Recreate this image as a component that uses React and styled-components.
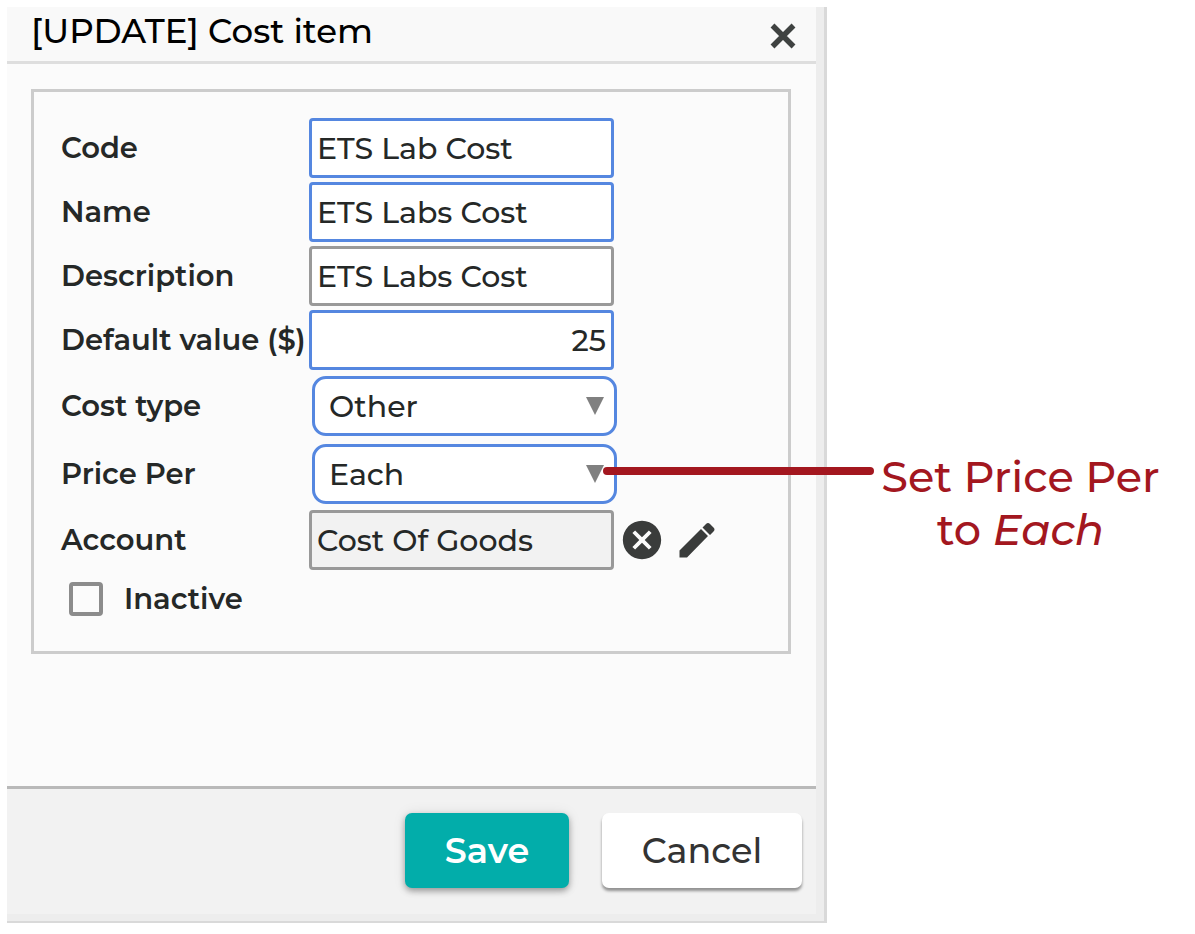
import React from "react";
import styled, { createGlobalStyle } from "styled-components";
import { MdCancel, MdEdit } from "react-icons/md";

const GlobalStyle = createGlobalStyle`
  *, *::before, *::after { box-sizing: border-box; }
  body {
    margin: 0;
    background: #fff;
    color: #252827;
    font-family: Montserrat, Inter, "Liberation Sans", sans-serif;
    font-weight: 500;
  }
  button, input, select { font: inherit; color: inherit; }
`;

const Page = styled.div`
  display: grid;
  grid-template-columns: minmax(0, 820px) minmax(320px, 1fr);
  align-items: start;
  padding: 7px 0 11px 7px;
`;

const Dialog = styled.section`
  border: solid #d9d9d9;
  border-width: 0 3px 2px 0;
`;

const Frame = styled.div`
  border: solid #ededed;
  border-width: 0 8px 7px 0;
  background: #fbfbfb;
`;

const Header = styled.header`
  display: flex;
  align-items: flex-start;
  justify-content: space-between;
  padding: 0 16px 6px 24px;
  border-bottom: 3px solid #dedede;
  background: #f9f9f9;
`;

const Title = styled.h1`
  margin: 0;
  color: #000;
  font-size: 34px;
  line-height: 48px;
  font-weight: 500;
`;

const IconButton = styled.button`
  display: flex;
  padding: 0;
  border: 0;
  background: none;
  color: #3a3c3b;
  cursor: pointer;
`;

const CloseButton = styled(IconButton)`
  padding-top: 12px;
`;

const Content = styled.div`
  padding: 25px 25px 132px 24px;
`;

const Group = styled.fieldset`
  display: flex;
  flex-direction: column;
  gap: 4px;
  min-width: 0;
  margin: 0;
  padding: 26px 27px 27px;
  border: 3px solid #ccc;
`;

const Row = styled.div`
  display: grid;
  grid-template-columns: 248px minmax(0, 305px) auto;
  align-items: center;
  justify-content: start;
  font-size: 30px;
`;

const Label = styled.label`
  font-size: 29px;
  line-height: 36px;
  font-weight: 600;
  white-space: nowrap;
`;

const TextInput = styled.input`
  width: 100%;
  height: 60px;
  padding: 0 5px;
  border: 3px solid ${(p) => (p.$required ? "#5587e0" : "#999")};
  border-radius: 4px;
  background: ${(p) => (p.readOnly ? "#f2f2f2" : "#fff")};
  text-align: ${(p) => (p.$numeric ? "right" : "left")};
  outline: none;
`;

const SelectBox = styled.div`
  position: relative;
  width: 100%;
  margin: 2px 0 2px 3px;
`;

const Select = styled.select`
  display: block;
  width: 100%;
  height: 60px;
  padding: 0 40px 0 14px;
  border: 3px solid #5587e0;
  border-radius: 14px;
  background: #fff;
  appearance: none;
  outline: none;
`;

const Arrow = styled.svg`
  position: absolute;
  top: 21px;
  right: 13px;
  pointer-events: none;
`;

const Actions = styled.div`
  display: flex;
  gap: 9px;
  padding-left: 5px;
`;

const CheckRow = styled.div`
  display: flex;
  align-items: center;
  gap: 21px;
  height: 50px;
  padding-left: 8px;
`;

const Checkbox = styled.input`
  width: 34px;
  height: 34px;
  margin: 0;
  border: 4px solid #8c8c8c;
  border-radius: 4px;
  background: #fbfbfb;
  appearance: none;

  &:checked { background: #8c8c8c; }
`;

const Footer = styled.footer`
  display: flex;
  justify-content: flex-end;
  gap: 33px;
  padding: 24px 14px 26px;
  border-top: 3px solid #b9b9b9;
  background: #f2f2f2;
`;

const Button = styled.button`
  min-width: ${(p) => (p.$primary ? "164px" : "200px")};
  height: 75px;
  padding: 0 24px;
  border: 0;
  border-radius: 7px;
  background: ${(p) => (p.$primary ? "#02adaa" : "#fff")};
  color: ${(p) => (p.$primary ? "#fff" : "#333")};
  box-shadow: ${(p) =>
    p.$primary
      ? "0 3px 6px rgba(0, 0, 0, 0.35), 0 0 14px rgba(0, 0, 0, 0.08)"
      : "0 3px 3px rgba(0, 0, 0, 0.4)"};
  font-size: 35px;
  font-weight: ${(p) => (p.$primary ? 600 : 500)};
  cursor: pointer;
`;

const Note = styled.aside`
  position: relative;
  margin-top: 443px;
  padding: 0 28px 0 47px;
  color: #a3171f;
  font-size: 43px;
  line-height: 53px;
  text-align: center;
`;

const Pointer = styled.span`
  position: absolute;
  top: 17px;
  right: calc(100% - 47px);
  width: 271px;
  height: 8px;
  border-radius: 4px;
  background: #a3171f;
`;

const NoteText = styled.p`
  margin: 0;
`;

function TextField({ id, label, required, numeric, readOnly, value, children }) {
  return (
    <Row>
      <Label htmlFor={id}>{label}</Label>
      <TextInput
        id={id}
        type="text"
        defaultValue={value}
        readOnly={readOnly}
        $required={required}
        $numeric={numeric}
      />
      {children}
    </Row>
  );
}

function SelectField({ id, label, options }) {
  return (
    <Row>
      <Label htmlFor={id}>{label}</Label>
      <SelectBox>
        <Select id={id} defaultValue={options[0]}>
          {options.map((o) => (
            <option key={o}>{o}</option>
          ))}
        </Select>
        <Arrow width="18" height="18" viewBox="0 0 18 18" aria-hidden="true">
          <path d="M0 0H18L9 18Z" fill="#808080" />
        </Arrow>
      </SelectBox>
    </Row>
  );
}

export default function App() {
  return (
    <>
      <GlobalStyle />
      <Page>
        <Dialog role="dialog" aria-labelledby="title">
          <Frame>
            <Header>
              <Title id="title">[UPDATE] Cost item</Title>
              <CloseButton type="button" aria-label="Close">
                <svg width="34" height="34" viewBox="0 0 34 34" fill="none">
                  <path d="M6.5 6.5L27.5 27.5M27.5 6.5L6.5 27.5" stroke="#3f4241" strokeWidth="5.5" />
                </svg>
              </CloseButton>
            </Header>
            <Content>
              <Group>
                <TextField id="code" label="Code" value="ETS Lab Cost" required />
                <TextField id="name" label="Name" value="ETS Labs Cost" required />
                <TextField id="description" label="Description" value="ETS Labs Cost" />
                <TextField id="value" label="Default value ($)" value="25" required numeric />
                <SelectField id="type" label="Cost type" options={["Other"]} />
                <SelectField id="per" label="Price Per" options={["Each"]} />
                <TextField id="account" label="Account" value="Cost Of Goods" readOnly>
                  <Actions>
                    <IconButton type="button" aria-label="Clear account">
                      <MdCancel size={46} />
                    </IconButton>
                    <IconButton type="button" aria-label="Edit account">
                      <svg width="46" height="46" viewBox="0 0 46 46" fill="currentColor">
                        <path d="M5.5 40.5V33.5L27 12L34 19L13 40.5ZM28.5 10.5L32 7Q34 5 36 7L39.5 10.5Q41.5 12.5 39.5 14.5L36 18Z" />
                      </svg>
                    </IconButton>
                  </Actions>
                </TextField>
                <CheckRow>
                  <Checkbox id="inactive" type="checkbox" />
                  <Label htmlFor="inactive">Inactive</Label>
                </CheckRow>
              </Group>
            </Content>
            <Footer>
              <Button type="button" $primary>Save</Button>
              <Button type="button">Cancel</Button>
            </Footer>
          </Frame>
        </Dialog>
        <Note>
          <Pointer />
          <NoteText>
            Set Price Per
            <br />
            to <em>Each</em>
          </NoteText>
        </Note>
      </Page>
    </>
  );
}
